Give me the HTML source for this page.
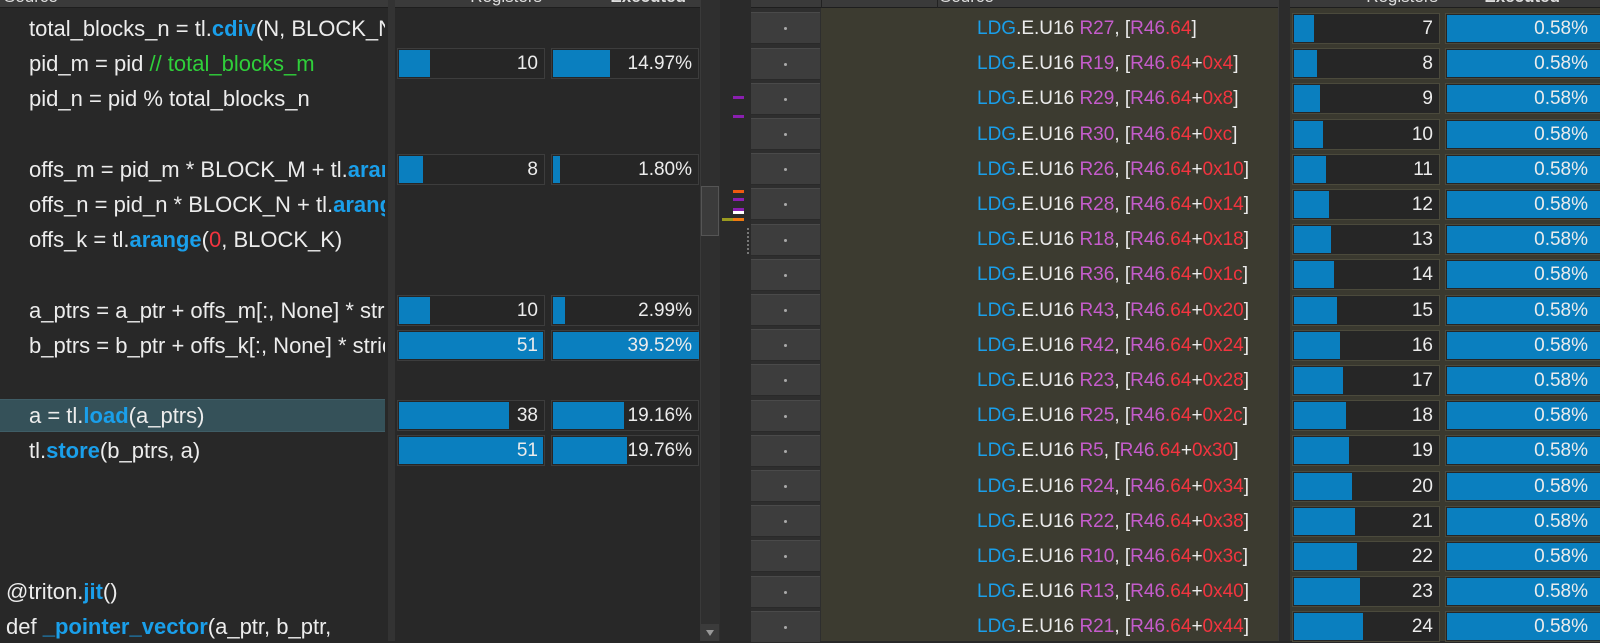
<!DOCTYPE html>
<html><head><meta charset="utf-8"><style>
*{margin:0;padding:0;box-sizing:border-box}
body{width:1600px;height:641px;overflow:hidden;background:#282828;font-family:"Liberation Sans",Arial,sans-serif;font-size:19px;color:#ececec;position:relative}
.a{position:absolute}
.hd{position:absolute;top:0;height:8px;background:#3a3a3a;overflow:hidden;border-bottom:1px solid #1e1e1e}
.hd span{position:absolute;top:-13px;font-size:17px;color:#ddd}
.ln{position:absolute;height:31px;line-height:31px;white-space:nowrap}
.k{color:#1a9fea}.g{color:#2fcf3a}.r{color:#f2343f}.p{color:#c55ccc}
.L{font-size:22px}
.L .k{font-weight:bold}
.c{position:absolute;height:31px;border:1px solid #3d3d3d;background:#262626;text-align:right;line-height:29px;padding-right:6px;font-size:19px}
.c b{position:absolute;left:1px;top:1px;bottom:1px;background:#0a7fbf;font-weight:normal}
.c i{position:relative;font-style:normal}
.rc{border-color:#4b4a3c}
.gb{position:absolute;left:751px;width:69px;height:32px;background:#3d3d3d;border-top:1px solid #4a4a4a;border-bottom:1px solid #2a2a2a}
.gb:after{content:"";position:absolute;left:33px;top:14px;width:3px;height:3px;border-radius:2px;background:#aaa}
.m{position:absolute;height:3px;width:11px;left:733px}
</style></head><body>
<div class="a" style="left:388px;top:0;width:7px;height:641px;background:#333"></div>
<div class="a" style="left:700px;top:0;width:20px;height:641px;background:#2f2f2f;border-left:1px solid #3a3a3a"></div>
<div class="a" style="left:701px;top:186px;width:18px;height:50px;background:#3b3b3b;border:1px solid #555"></div>
<div class="a" style="left:701px;top:624px;width:18px;height:17px;background:#3b3b3b"></div>
<div class="a" style="left:706px;top:630px;width:0;height:0;border-left:4px solid transparent;border-right:4px solid transparent;border-top:6px solid #999"></div>
<div class="a" style="left:720px;top:0;width:31px;height:641px;background:#2a2a2a"></div>
<div class="a" style="left:751px;top:0;width:70px;height:641px;background:#2e2e2e"></div>
<div class="a" style="left:821px;top:0;width:457px;height:641px;background:#3c3b30"></div>
<div class="a" style="left:1278px;top:0;width:14px;height:641px;background:#2c2c2c;border-left:1px solid #3a3a3a;border-right:1px solid #3a3a3a"></div>
<div class="a" style="left:1290px;top:0;width:310px;height:641px;background:#3a392f"></div>
<div class="m" style="top:96px;background:#8a1fb0"></div>
<div class="m" style="top:115px;background:#8a1fb0"></div>
<div class="m" style="top:190px;background:#f05a10"></div>
<div class="m" style="top:198px;background:#8a1fb0"></div>
<div class="m" style="top:208px;background:#8a1fb0"></div>
<div class="m" style="top:211px;background:#fff"></div>
<div class="m" style="top:218px;background:#f07a10"></div>
<div class="a" style="left:722px;top:218px;width:11px;height:3px;background:#9a9a20"></div>
<div class="a" style="left:747px;top:228px;width:2px;height:26px;border-left:2px dotted #777"></div>
<div class="hd" style="left:0;width:388px"><span style="left:4px">Source</span></div>
<div class="hd" style="left:395px;width:305px"><span style="right:158px">Registers</span><span style="right:14px;font-weight:bold">Executed</span></div>
<div class="hd" style="left:751px;width:70px"></div>
<div class="hd" style="left:821px;width:457px;border-left:1px solid #222"><span style="left:118px">Source</span></div>
<div class="a" style="left:937px;top:0;width:1px;height:8px;background:#222"></div>
<div class="hd" style="left:1290px;width:310px"><span style="right:162px">Registers</span><span style="right:40px;font-weight:bold">Executed</span></div>
<div class="a L" style="left:0;top:0;width:385px;height:641px;overflow:hidden">
<div class="a" style="left:0;top:399px;width:385px;height:33px;background:#355159;border-top:1px solid #3f5d66;border-bottom:1px solid #3f5d66"></div>
<div class="ln" style="left:29px;top:13px">total_blocks_n = tl.<span class="k">cdiv</span>(N, BLOCK_N</div>
<div class="ln" style="left:29px;top:48px">pid_m = pid <span class="g">// total_blocks_m</span></div>
<div class="ln" style="left:29px;top:83px">pid_n = pid % total_blocks_n</div>
<div class="ln" style="left:29px;top:154px">offs_m = pid_m * BLOCK_M + tl.<span class="k">arange</span></div>
<div class="ln" style="left:29px;top:189px">offs_n = pid_n * BLOCK_N + tl.<span class="k">arange</span></div>
<div class="ln" style="left:29px;top:224px">offs_k = tl.<span class="k">arange</span>(<span class="r">0</span>, BLOCK_K)</div>
<div class="ln" style="left:29px;top:295px">a_ptrs = a_ptr + offs_m[:, None] * stride</div>
<div class="ln" style="left:29px;top:330px">b_ptrs = b_ptr + offs_k[:, None] * stride</div>
<div class="ln" style="left:29px;top:400px">a = tl.<span class="k">load</span>(a_ptrs)</div>
<div class="ln" style="left:29px;top:435px">tl.<span class="k">store</span>(b_ptrs, a)</div>
<div class="ln" style="left:6px;top:576px">@triton.<span class="k">jit</span>()</div>
<div class="ln" style="left:6px;top:611px">def <span class="k">_pointer_vector</span>(a_ptr, b_ptr,</div>
</div>
<div class="c" style="left:397px;top:48px;width:148px"><b style="width:31px"></b><i>10</i></div>
<div class="c" style="left:551px;top:48px;width:148px"><b style="width:57px"></b><i>14.97%</i></div>
<div class="c" style="left:397px;top:154px;width:148px"><b style="width:24px"></b><i>8</i></div>
<div class="c" style="left:551px;top:154px;width:148px"><b style="width:7px"></b><i>1.80%</i></div>
<div class="c" style="left:397px;top:295px;width:148px"><b style="width:31px"></b><i>10</i></div>
<div class="c" style="left:551px;top:295px;width:148px"><b style="width:12px"></b><i>2.99%</i></div>
<div class="c" style="left:397px;top:330px;width:148px"><b style="width:144px"></b><i>51</i></div>
<div class="c" style="left:551px;top:330px;width:148px"><b style="width:146px"></b><i>39.52%</i></div>
<div class="c" style="left:397px;top:400px;width:148px"><b style="width:110px"></b><i>38</i></div>
<div class="c" style="left:551px;top:400px;width:148px"><b style="width:71px"></b><i>19.16%</i></div>
<div class="c" style="left:397px;top:435px;width:148px"><b style="width:144px"></b><i>51</i></div>
<div class="c" style="left:551px;top:435px;width:148px"><b style="width:74px"></b><i>19.76%</i></div>
<div class="gb" style="top:12px"></div><div class="gb" style="top:48px"></div><div class="gb" style="top:83px"></div><div class="gb" style="top:118px"></div><div class="gb" style="top:153px"></div><div class="gb" style="top:188px"></div><div class="gb" style="top:224px"></div><div class="gb" style="top:259px"></div><div class="gb" style="top:294px"></div><div class="gb" style="top:329px"></div><div class="gb" style="top:364px"></div><div class="gb" style="top:400px"></div><div class="gb" style="top:435px"></div><div class="gb" style="top:470px"></div><div class="gb" style="top:505px"></div><div class="gb" style="top:540px"></div><div class="gb" style="top:576px"></div><div class="gb" style="top:611px"></div>
<div class="a" style="left:821px;top:0;width:457px;height:641px;overflow:hidden">
<div class="ln" style="left:156px;top:13px"><span class="k">LDG</span>.E.U16 <span class="p">R27</span>, [<span class="p">R46</span><span class="r">.64</span>]</div>
<div class="ln" style="left:156px;top:48px"><span class="k">LDG</span>.E.U16 <span class="p">R19</span>, [<span class="p">R46</span><span class="r">.64</span>+<span class="r">0x4</span>]</div>
<div class="ln" style="left:156px;top:83px"><span class="k">LDG</span>.E.U16 <span class="p">R29</span>, [<span class="p">R46</span><span class="r">.64</span>+<span class="r">0x8</span>]</div>
<div class="ln" style="left:156px;top:119px"><span class="k">LDG</span>.E.U16 <span class="p">R30</span>, [<span class="p">R46</span><span class="r">.64</span>+<span class="r">0xc</span>]</div>
<div class="ln" style="left:156px;top:154px"><span class="k">LDG</span>.E.U16 <span class="p">R26</span>, [<span class="p">R46</span><span class="r">.64</span>+<span class="r">0x10</span>]</div>
<div class="ln" style="left:156px;top:189px"><span class="k">LDG</span>.E.U16 <span class="p">R28</span>, [<span class="p">R46</span><span class="r">.64</span>+<span class="r">0x14</span>]</div>
<div class="ln" style="left:156px;top:224px"><span class="k">LDG</span>.E.U16 <span class="p">R18</span>, [<span class="p">R46</span><span class="r">.64</span>+<span class="r">0x18</span>]</div>
<div class="ln" style="left:156px;top:259px"><span class="k">LDG</span>.E.U16 <span class="p">R36</span>, [<span class="p">R46</span><span class="r">.64</span>+<span class="r">0x1c</span>]</div>
<div class="ln" style="left:156px;top:295px"><span class="k">LDG</span>.E.U16 <span class="p">R43</span>, [<span class="p">R46</span><span class="r">.64</span>+<span class="r">0x20</span>]</div>
<div class="ln" style="left:156px;top:330px"><span class="k">LDG</span>.E.U16 <span class="p">R42</span>, [<span class="p">R46</span><span class="r">.64</span>+<span class="r">0x24</span>]</div>
<div class="ln" style="left:156px;top:365px"><span class="k">LDG</span>.E.U16 <span class="p">R23</span>, [<span class="p">R46</span><span class="r">.64</span>+<span class="r">0x28</span>]</div>
<div class="ln" style="left:156px;top:400px"><span class="k">LDG</span>.E.U16 <span class="p">R25</span>, [<span class="p">R46</span><span class="r">.64</span>+<span class="r">0x2c</span>]</div>
<div class="ln" style="left:156px;top:435px"><span class="k">LDG</span>.E.U16 <span class="p">R5</span>, [<span class="p">R46</span><span class="r">.64</span>+<span class="r">0x30</span>]</div>
<div class="ln" style="left:156px;top:471px"><span class="k">LDG</span>.E.U16 <span class="p">R24</span>, [<span class="p">R46</span><span class="r">.64</span>+<span class="r">0x34</span>]</div>
<div class="ln" style="left:156px;top:506px"><span class="k">LDG</span>.E.U16 <span class="p">R22</span>, [<span class="p">R46</span><span class="r">.64</span>+<span class="r">0x38</span>]</div>
<div class="ln" style="left:156px;top:541px"><span class="k">LDG</span>.E.U16 <span class="p">R10</span>, [<span class="p">R46</span><span class="r">.64</span>+<span class="r">0x3c</span>]</div>
<div class="ln" style="left:156px;top:576px"><span class="k">LDG</span>.E.U16 <span class="p">R13</span>, [<span class="p">R46</span><span class="r">.64</span>+<span class="r">0x40</span>]</div>
<div class="ln" style="left:156px;top:611px"><span class="k">LDG</span>.E.U16 <span class="p">R21</span>, [<span class="p">R46</span><span class="r">.64</span>+<span class="r">0x44</span>]</div>
</div>
<div class="c rc" style="left:1292px;top:13px;width:148px"><b style="width:20px"></b><i>7</i></div>
<div class="c rc" style="left:1292px;top:48px;width:148px"><b style="width:23px"></b><i>8</i></div>
<div class="c rc" style="left:1292px;top:83px;width:148px"><b style="width:26px"></b><i>9</i></div>
<div class="c rc" style="left:1292px;top:119px;width:148px"><b style="width:29px"></b><i>10</i></div>
<div class="c rc" style="left:1292px;top:154px;width:148px"><b style="width:32px"></b><i>11</i></div>
<div class="c rc" style="left:1292px;top:189px;width:148px"><b style="width:35px"></b><i>12</i></div>
<div class="c rc" style="left:1292px;top:224px;width:148px"><b style="width:37px"></b><i>13</i></div>
<div class="c rc" style="left:1292px;top:259px;width:148px"><b style="width:40px"></b><i>14</i></div>
<div class="c rc" style="left:1292px;top:295px;width:148px"><b style="width:43px"></b><i>15</i></div>
<div class="c rc" style="left:1292px;top:330px;width:148px"><b style="width:46px"></b><i>16</i></div>
<div class="c rc" style="left:1292px;top:365px;width:148px"><b style="width:49px"></b><i>17</i></div>
<div class="c rc" style="left:1292px;top:400px;width:148px"><b style="width:52px"></b><i>18</i></div>
<div class="c rc" style="left:1292px;top:435px;width:148px"><b style="width:55px"></b><i>19</i></div>
<div class="c rc" style="left:1292px;top:471px;width:148px"><b style="width:58px"></b><i>20</i></div>
<div class="c rc" style="left:1292px;top:506px;width:148px"><b style="width:61px"></b><i>21</i></div>
<div class="c rc" style="left:1292px;top:541px;width:148px"><b style="width:63px"></b><i>22</i></div>
<div class="c rc" style="left:1292px;top:576px;width:148px"><b style="width:66px"></b><i>23</i></div>
<div class="c rc" style="left:1292px;top:611px;width:148px"><b style="width:69px"></b><i>24</i></div>
<div class="c rc" style="left:1445px;top:13px;width:160px;padding-right:16px"><b style="right:0"></b><i>0.58%</i></div>
<div class="c rc" style="left:1445px;top:48px;width:160px;padding-right:16px"><b style="right:0"></b><i>0.58%</i></div>
<div class="c rc" style="left:1445px;top:83px;width:160px;padding-right:16px"><b style="right:0"></b><i>0.58%</i></div>
<div class="c rc" style="left:1445px;top:119px;width:160px;padding-right:16px"><b style="right:0"></b><i>0.58%</i></div>
<div class="c rc" style="left:1445px;top:154px;width:160px;padding-right:16px"><b style="right:0"></b><i>0.58%</i></div>
<div class="c rc" style="left:1445px;top:189px;width:160px;padding-right:16px"><b style="right:0"></b><i>0.58%</i></div>
<div class="c rc" style="left:1445px;top:224px;width:160px;padding-right:16px"><b style="right:0"></b><i>0.58%</i></div>
<div class="c rc" style="left:1445px;top:259px;width:160px;padding-right:16px"><b style="right:0"></b><i>0.58%</i></div>
<div class="c rc" style="left:1445px;top:295px;width:160px;padding-right:16px"><b style="right:0"></b><i>0.58%</i></div>
<div class="c rc" style="left:1445px;top:330px;width:160px;padding-right:16px"><b style="right:0"></b><i>0.58%</i></div>
<div class="c rc" style="left:1445px;top:365px;width:160px;padding-right:16px"><b style="right:0"></b><i>0.58%</i></div>
<div class="c rc" style="left:1445px;top:400px;width:160px;padding-right:16px"><b style="right:0"></b><i>0.58%</i></div>
<div class="c rc" style="left:1445px;top:435px;width:160px;padding-right:16px"><b style="right:0"></b><i>0.58%</i></div>
<div class="c rc" style="left:1445px;top:471px;width:160px;padding-right:16px"><b style="right:0"></b><i>0.58%</i></div>
<div class="c rc" style="left:1445px;top:506px;width:160px;padding-right:16px"><b style="right:0"></b><i>0.58%</i></div>
<div class="c rc" style="left:1445px;top:541px;width:160px;padding-right:16px"><b style="right:0"></b><i>0.58%</i></div>
<div class="c rc" style="left:1445px;top:576px;width:160px;padding-right:16px"><b style="right:0"></b><i>0.58%</i></div>
<div class="c rc" style="left:1445px;top:611px;width:160px;padding-right:16px"><b style="right:0"></b><i>0.58%</i></div>
</body></html>
